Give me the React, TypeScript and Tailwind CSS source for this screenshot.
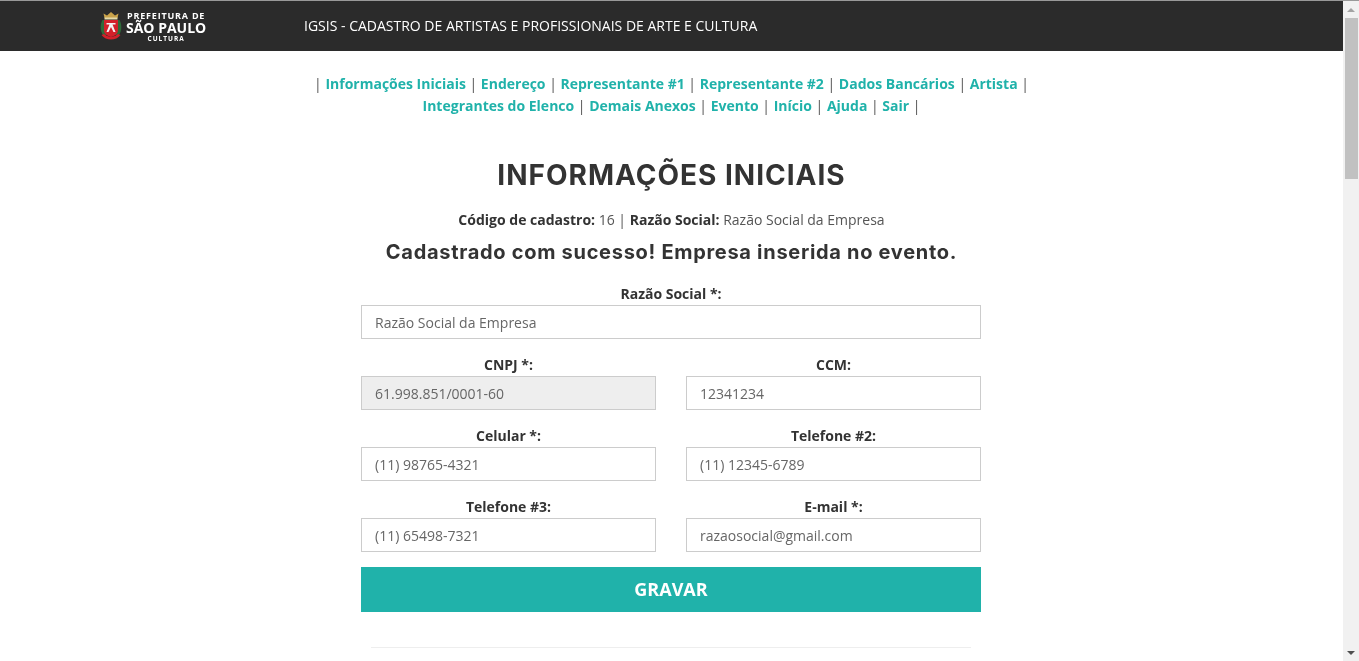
const font = "font-['Open_Sans',sans-serif]";

const links = [
  ["Informações Iniciais", "Endereço", "Representante #1", "Representante #2", "Dados Bancários", "Artista"],
  ["Integrantes do Elenco", "Demais Anexos", "Evento", "Início", "Ajuda", "Sair"],
];

const Crest = () => (
  <svg width="22" height="30" viewBox="0 0 22 30">
    <path d="M4.5 7 L3.5 2.5 L7 4.5 L11 1 L15 4.5 L18.5 2.5 L17.5 7 Z" fill="#c9a24a" />
    <rect x="4.5" y="6.5" width="13" height="2" fill="#e6d9a8" />
    <path d="M2.5 9 C0 13 0 20 3 24 L6 26 L6 9 Z" fill="#2e6b3a" />
    <path d="M19.5 9 C22 13 22 20 19 24 L16 26 L16 9 Z" fill="#2e6b3a" />
    <path d="M4 9 H18 V19 C18 23 14.5 25 11 26 C7.5 25 4 23 4 19 Z" fill="#d3202a" />
    <path d="M6.5 12 H15.5 V13.5 H12.5 L15.5 21 H13.5 L11 16 L8.5 21 H6.5 L9.5 13.5 H6.5 Z" fill="#f3f3f3" />
    <path d="M1.5 24 C6 30 16 30 20.5 24 L18 23 C14 26.5 8 26.5 4 23 Z" fill="#d3202a" />
  </svg>
);

const Field = ({ label, value, disabled }: { label: string; value: string; disabled?: boolean }) => (
  <div className="flex-1 min-w-0">
    <label className="block text-center text-sm font-bold leading-[20px] text-[#333] mb-[1px]">{label}</label>
    <input
      readOnly
      value={value}
      className={`block w-full h-[34px] px-[13px] text-sm text-[#666] border border-[#ccc] outline-none ${disabled ? "bg-[#eee]" : "bg-white"}`}
    />
  </div>
);

const Scrollbar = () => (
  <div className="w-[16px] shrink-0 bg-[#f1f1f1] flex flex-col items-center">
    <div className="h-[17px] flex items-center justify-center">
      <div className="w-0 h-0 border-x-[4px] border-x-transparent border-b-[4px] border-b-[#a3a3a3]" />
    </div>
    <div className="w-[13px] h-[161px] bg-[#c1c1c1]" />
    <div className="flex-1" />
    <div className="h-[17px] flex items-center justify-center">
      <div className="w-0 h-0 border-x-[4px] border-x-transparent border-t-[4px] border-t-[#505050]" />
    </div>
  </div>
);

export default function App() {
  return (
    <div className={`flex h-screen overflow-hidden border-t border-t-[#999] ${font}`}>
      <div className="flex-1 min-w-0 will-change-transform">
        <header className="h-[50px] bg-[#2b2b2b] flex items-center">
          <div className="w-[304px] pl-[100px] flex items-center gap-[5px]">
            <Crest />
            <div className="flex flex-col items-center text-white font-bold -ml-[1px]">
              <span className="text-[9px] leading-[11px] tracking-[0.8px]">PREFEITURA DE</span>
              <span className="text-[14px] leading-[13px]">SÃO PAULO</span>
              <span className="text-[6.5px] leading-[9px] tracking-[1px]">CULTURA</span>
            </div>
          </div>
          <span className="text-sm text-white">IGSIS - CADASTRO DE ARTISTAS E PROFISSIONAIS DE ARTE E CULTURA</span>
        </header>

        <nav className="mt-[22px] text-center text-sm leading-[22px] text-[#555]">
          {links.map((row, i) => (
            <div key={i}>
              {i === 0 ? "| " : ""}
              {row.map((l) => (
                <span key={l}>
                  <a className="font-bold text-[#20b2aa]">{l}</a> |{" "}
                </span>
              ))}
            </div>
          ))}
        </nav>

        <h2 className="mt-[38px] text-center text-[28px] leading-[40px] tracking-[1px] font-bold text-[#333] font-['Inter',sans-serif]">
          INFORMAÇÕES INICIAIS
        </h2>
        <p className="mt-[15px] text-center text-sm leading-[20px] text-[#555]">
          <b className="text-[#333]">Código de cadastro:</b> 16 | <b className="text-[#333]">Razão Social:</b> Razão Social da Empresa
        </p>
        <h4 className="mt-[7px] text-center text-[20px] leading-[30px] tracking-[0.7px] font-bold text-[#333] font-['Inter',sans-serif]">
          Cadastrado com sucesso! Empresa inserida no evento.
        </h4>

        <form className="w-[620px] mt-[17px] ml-[361px] flex flex-col gap-[16px]">
          <Field label="Razão Social *:" value="Razão Social da Empresa" />
          <div className="flex gap-[30px]">
            <Field label="CNPJ *:" value="61.998.851/0001-60" disabled />
            <Field label="CCM:" value="12341234" />
          </div>
          <div className="flex gap-[30px]">
            <Field label="Celular *:" value="(11) 98765-4321" />
            <Field label="Telefone #2:" value="(11) 12345-6789" />
          </div>
          <div className="flex gap-[30px]">
            <Field label="Telefone #3:" value="(11) 65498-7321" />
            <Field label="E-mail *:" value="razaosocial@gmail.com" />
          </div>
          <button type="button" className="h-[45px] -mt-[1px] pb-[2px] bg-[#20b2aa] text-white text-lg font-bold">
            GRAVAR
          </button>
        </form>
        <hr className="w-[600px] ml-[371px] mt-[35px] border-t border-[#eee]" />
      </div>
      <Scrollbar />
    </div>
  );
}
